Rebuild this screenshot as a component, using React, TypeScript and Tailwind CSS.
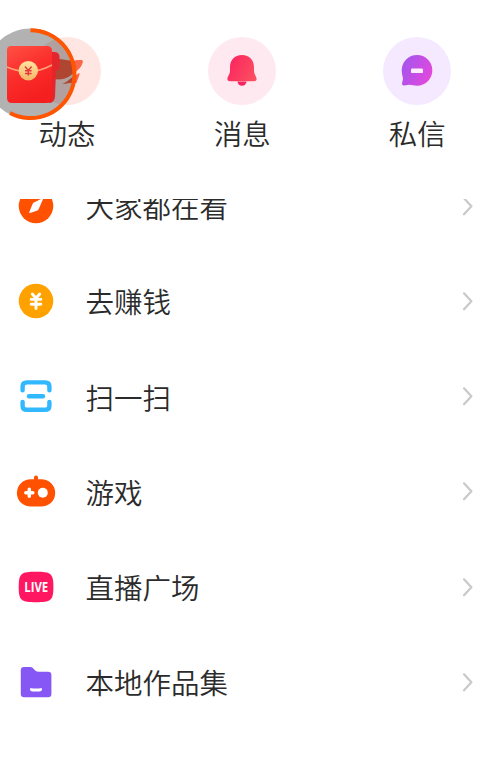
import type { ReactNode } from 'react';

interface Shortcut {
  label: string;
  tint: string;
  icon: ReactNode;
}

interface MenuItem {
  label: string;
  icon: ReactNode;
}

function FeedIcon() {
  return (
    <svg viewBox="0 0 40 40" className="w-10 h-10">
      <path d="M7 9 C12 6.5 18 9.5 24 9.6 C29 9.8 31 8.6 34.5 9 C36.8 9.4 35.8 12 34.5 14.5 C32.5 18.5 28 21 23 25 C18 28.5 11 29 7 28 Z" fill="#fb6548" />
      <path d="M32.4 21.8 C29 24.5 24.5 26.5 20.5 30 C18.5 31.5 16.5 32.3 15.5 33 C20 33.2 24 31 29.5 32.2 C30 29 33 25 32.4 21.8 Z" fill="#fb6548" />
    </svg>
  );
}

function BellIcon() {
  return (
    <svg viewBox="0 0 40 40" className="w-10 h-10">
      <defs>
        <linearGradient id="bell" x1="0" y1="0.3" x2="1" y2="0.8">
          <stop offset="0" stopColor="#fb2560" />
          <stop offset="1" stopColor="#fc5060" />
        </linearGradient>
      </defs>
      <path d="M15.5 30.5 a4.5 4.2 0 0 0 9 0 Z" fill="#f52560" />
      <path d="M20 4 C12.5 4 8 9.2 8 16.2 V19.5 C8 23.5 5.4 25.5 5.4 28 C5.4 29.6 6.5 30.2 8 30.2 H32 C33.5 30.2 34.6 29.6 34.6 28 C34.6 25.5 32 23.5 32 19.5 V16.2 C32 9.2 27.5 4 20 4 Z" fill="url(#bell)" />
    </svg>
  );
}

function ChatIcon() {
  return (
    <svg viewBox="0 0 40 40" className="w-10 h-10">
      <defs>
        <linearGradient id="chat" x1="0" y1="0.3" x2="1" y2="0.75">
          <stop offset="0" stopColor="#a555ee" />
          <stop offset="1" stopColor="#e548dc" />
        </linearGradient>
      </defs>
      <path d="M20 4 A15.3 15.3 0 1 1 20 34.7 C17 34.7 14.5 33.8 12.5 33.8 L7.2 34.5 C5.5 34.7 4.8 33.6 5.1 32 L6 28 C6 26 4.7 23.5 4.7 19.3 A15.3 15.3 0 0 1 20 4 Z" fill="url(#chat)" />
      <rect x="14" y="17.5" width="12" height="4.6" rx="1.2" fill="#fdeefe" />
    </svg>
  );
}

function CompassIcon() {
  return (
    <svg viewBox="0 0 40 40" className="w-10 h-10">
      <circle cx="20" cy="20" r="17.3" fill="#ff5100" />
      <path d="M27 13.2 L22.8 22.8 C22.4 23.8 21.8 24.4 20.8 24.8 L14 27 C13.3 27.2 13 26.8 13.3 26.1 L16.5 18.2 C16.9 17.2 17.5 16.7 18.5 16.3 L26 12.4 C26.8 12 27.3 12.5 27 13.2 Z" fill="#fff" />
    </svg>
  );
}

function CoinIcon() {
  return (
    <svg viewBox="0 0 40 40" className="w-10 h-10">
      <circle cx="20" cy="20" r="17.3" fill="#ffa200" />
      <path d="M16.3 13 L20 17.2 L23.7 13 M20 17.2 V27.5 M15.2 18.4 H24.8 M15.2 23.2 H24.8" stroke="#fff" strokeWidth="2.9" strokeLinecap="round" fill="none" />
    </svg>
  );
}

function ScanIcon() {
  return (
    <svg viewBox="0 0 40 40" className="w-10 h-10">
      <g fill="none" stroke="#32b8ff" strokeWidth="4.4" strokeLinecap="round">
        <path d="M6.6 14.2 V10.5 Q6.6 6.4 10.9 6.4 H29.1 Q33.4 6.4 33.4 10.5 V14.2" />
        <path d="M6.6 26 V29.7 Q6.6 33.8 10.9 33.8 H29.1 Q33.4 33.8 33.4 29.7 V26" />
        <path d="M13 20.2 H27" />
      </g>
    </svg>
  );
}

function GameIcon() {
  return (
    <svg viewBox="0 0 40 40" className="w-10 h-10">
      <rect x="18" y="4.6" width="4" height="6" rx="1.8" fill="#ff5100" />
      <path d="M15 8.2 H25 C33 8.2 39.2 14 39.2 22 C39.2 30 33 35.4 25 35.4 H15 C7 35.4 0.9 30 0.9 22 C0.9 14 7 8.2 15 8.2 Z" fill="#ff5100" />
      <path d="M9.8 21.8 H16.8 M13.3 18.3 V25.3" stroke="#fff" strokeWidth="3.5" strokeLinecap="round" />
      <circle cx="26.8" cy="21.8" r="5" fill="#fff" />
    </svg>
  );
}

function LiveIcon() {
  return (
    <svg viewBox="0 0 40 40" className="w-10 h-10">
      <path d="M20 4.8 C34.5 4.8 37.4 6 37.4 20 C37.4 34 34.5 35.2 20 35.2 C5.5 35.2 2.7 34 2.7 20 C2.7 6 5.5 4.8 20 4.8 Z" fill="#ff1761" />
      <text x="8.2" y="24.8" textLength="24" lengthAdjust="spacingAndGlyphs" fill="#fff" className="text-[13.5px] font-bold font-['Open_Sans',sans-serif]">LIVE</text>
    </svg>
  );
}

function FolderIcon() {
  return (
    <svg viewBox="0 0 40 40" className="w-10 h-10">
      <path d="M8 4.9 H14.5 C17.5 4.9 18.7 9.7 22.2 9.7 H32 C34.3 9.7 35.4 10.9 35.4 13 V32 C35.4 34.1 34.3 35.2 32 35.2 H8.3 C6 35.2 4.8 34.1 4.8 32 V8.2 C4.8 6.1 5.9 4.9 8 4.9 Z" fill="#8657f4" />
      <path d="M14.5 26 Q20 27 25.5 26 C27 28.6 25.4 29.6 20 29.6 C14.6 29.6 13 28.6 14.5 26 Z" fill="#fff" />
    </svg>
  );
}

function Chevron() {
  return (
    <svg viewBox="0 0 12 22" className="w-3 h-[22px]">
      <path d="M2 3.3 L9.4 11.3 L2 19.3" fill="none" stroke="#c9c9c9" strokeWidth="2.2" strokeLinecap="round" strokeLinejoin="round" />
    </svg>
  );
}

const SHORTCUTS: Shortcut[] = [
  { label: '动态', tint: 'bg-[#ffe6e2]', icon: <FeedIcon /> },
  { label: '消息', tint: 'bg-[#ffe9f0]', icon: <BellIcon /> },
  { label: '私信', tint: 'bg-[#f5e9ff]', icon: <ChatIcon /> },
];

const MENU: MenuItem[] = [
  { label: '大家都在看', icon: <CompassIcon /> },
  { label: '去赚钱', icon: <CoinIcon /> },
  { label: '扫一扫', icon: <ScanIcon /> },
  { label: '游戏', icon: <GameIcon /> },
  { label: '直播广场', icon: <LiveIcon /> },
  { label: '本地作品集', icon: <FolderIcon /> },
];

// Floating reward timer, hangs off the left edge
function RedPacket() {
  return (
    <div className="absolute left-0 top-6 w-20 h-[100px] overflow-hidden">
      <svg viewBox="0 0 80 100" className="w-20 h-[100px]">
        <defs>
          <linearGradient id="packet" x1="0" y1="0" x2="0.4" y2="1">
            <stop offset="0" stopColor="#ff5145" />
            <stop offset="0.5" stopColor="#fb2f2d" />
            <stop offset="1" stopColor="#f51f20" />
          </linearGradient>
          <linearGradient id="coin" x1="0" y1="0" x2="0" y2="1">
            <stop offset="0" stopColor="#ffe3a0" />
            <stop offset="1" stopColor="#f5b565" />
          </linearGradient>
        </defs>
        <circle cx="30.5" cy="50" r="45.5" fill="#000" fillOpacity="0.3" />
        <path d="M30.5 6.3 A43.9 43.9 0 1 1 10 89" fill="none" stroke="#ff5500" strokeWidth="4" />
        <path d="M48 28 H55 Q59.5 28.5 59.5 33 V44 Q59 46.5 56 47 L55 73 Q54 79 49 79 Z" fill="#e3262c" />
        <path d="M7 26 Q7 22 11 22 H47 Q52 22 52 27 V73 Q52 79 46 79 H12 Q7 79 7 74 Z" fill="url(#packet)" />
        <path d="M7 43 Q30 53 52 41" fill="none" stroke="#ff9d74" strokeWidth="1.5" />
        <circle cx="28.3" cy="46.7" r="9.7" fill="url(#coin)" />
        <path d="M25 42.5 L28.3 46.4 L31.6 42.5 M28.3 46.4 V51.6 M25 46.8 H31.6 M25 49.4 H31.6" fill="none" stroke="#e4393d" strokeWidth="1.5" />
      </svg>
    </div>
  );
}

export default function App() {
  return (
    <div className="relative w-[500px] h-[759px] overflow-hidden bg-white text-[#2b2b2b] font-[350] font-['Noto_Sans_CJK_SC_DemiLight','Noto_Sans_CJK_SC',sans-serif]">
      <header className="flex h-[199px] gap-[107.2px] pl-[33px] pt-[37px]">
        {SHORTCUTS.map(({ label, tint, icon }) => (
          <div key={label} className="flex w-[68px] flex-col items-center">
            <div className={`flex h-[68px] w-[68px] shrink-0 items-center justify-center rounded-full ${tint}`}>{icon}</div>
            <span className="mt-2 text-[28.5px] leading-[40px] whitespace-nowrap">{label}</span>
          </div>
        ))}
      </header>

      {/* Scrolled list, first row is partly cut off */}
      <section className="h-[560px] overflow-hidden">
        <ul className="-mt-[41px]">
          {MENU.map(({ label, icon }) => (
            <li key={label} className="flex h-[95.25px] items-center pl-4 pr-[26px]">
              {icon}
              <span className="ml-[29.5px] flex-1 pt-px text-[28.5px] leading-[40px]">{label}</span>
              <Chevron />
            </li>
          ))}
        </ul>
      </section>

      <RedPacket />
    </div>
  );
}
